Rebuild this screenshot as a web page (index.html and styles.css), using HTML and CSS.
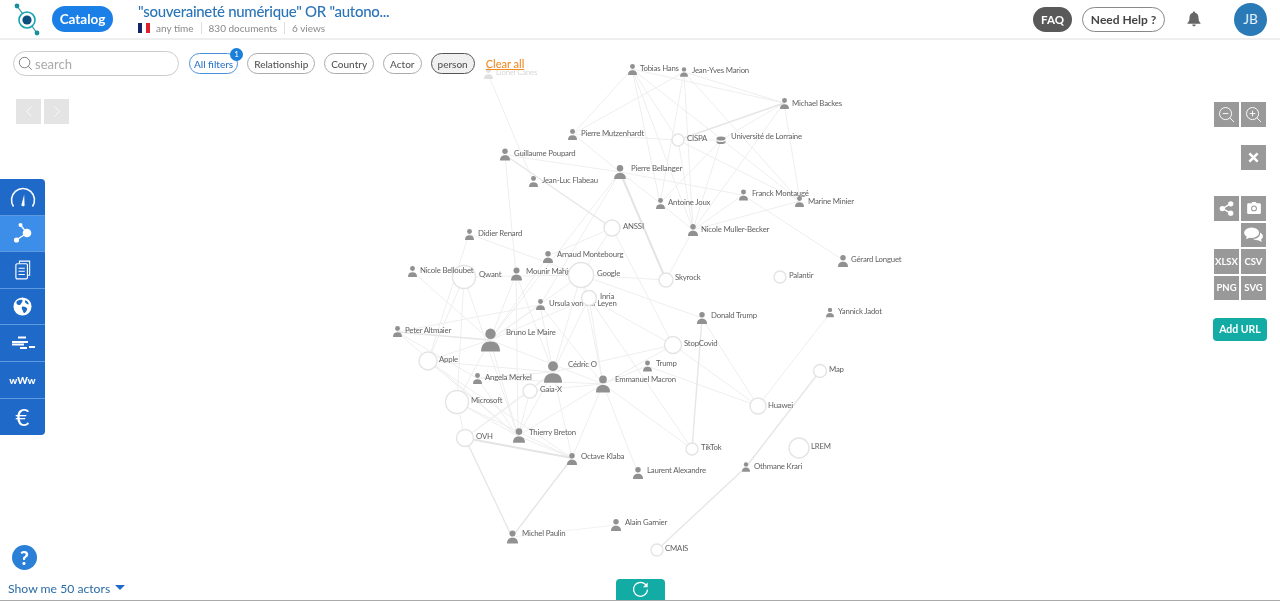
FILE: index.html
```html
<!DOCTYPE html>
<html lang="en">
<head>
    <meta charset="UTF-8">
    <meta name="viewport" content="width=device-width, initial-scale=1.0">
    <title>Catalog - actors</title>
    <link rel="stylesheet" href="styles.css">
</head>
<body>

    <header class="topbar">
        <svg class="logo" viewBox="0 0 30 34" width="30" height="34">
            <path d="M4 4 L24 31" stroke="#2a8f9c" stroke-width="1.2"/>
            <circle cx="4" cy="4" r="2.4" fill="#16919b"/>
            <circle cx="24" cy="31" r="2.4" fill="#16919b"/>
            <circle cx="14" cy="18" r="8" fill="#fff" stroke="#16a3ad" stroke-width="1.6"/>
            <circle cx="14" cy="18" r="4.6" fill="#0d4f7d"/>
        </svg>
        <a class="catalog-btn">Catalog</a>
        <div class="title-block">
            <div class="title">"souveraineté numérique" OR "autono...</div>
            <div class="meta">
                <span class="flag"><i class="flag__blue"></i><i class="flag__white"></i><i class="flag__red"></i></span>
                <span class="meta__item">any time</span>
                <span class="meta__item meta__item--sep">830 documents</span>
                <span class="meta__item meta__item--sep">6 views</span>
            </div>
        </div>
        <div class="topbar__right">
            <a class="faq-btn">FAQ</a>
            <a class="help-btn">Need Help ?</a>
            <svg class="bell" viewBox="0 0 14 16" width="14" height="16">
                <path d="M7 0.5 a1.2 1.2 0 0 1 1.2 1.3 C10.6 2.4 11.5 4.4 11.5 6.6 C11.5 9.6 12.2 10.8 13.5 12 L13.5 12.8 L0.5 12.8 L0.5 12 C1.8 10.8 2.5 9.6 2.5 6.6 C2.5 4.4 3.4 2.4 5.8 1.8 A1.2 1.2 0 0 1 7 0.5Z M5.2 13.6 h3.6 a1.8 1.8 0 0 1 -3.6 0Z" fill="#666"/>
            </svg>
            <div class="avatar">JB</div>
        </div>
    </header>

    <main class="canvas">

        <svg class="graph" viewBox="0 0 1280 601" width="1280" height="601">
            <defs>
                <symbol id="person" viewBox="0 0 20 24">
                    <circle cx="10" cy="5.5" r="5.5"/>
                    <path d="M0 24 C0 16.5 4 13.5 10 13.5 S20 16.5 20 24Z"/>
                </symbol>
            </defs>

            <!-- thin links -->
            <path class="edge" d="M632 69L573 134M632 69L660 203M632 69L693 230M632 69L678 140M632 69L800 201M632 69L784 103
                M684 72L573 134M684 72L660 203M684 72L800 201M684 72L693 230M684 72L784 103
                M784 103L721 140M784 103L800 201M784 103L693 230M573 134L678 140M678 140L721 140M678 140L693 230M678 140L800 201
                M721 140L660 203M721 140L693 230M573 134L620 172M505 155L620 172M488 74L533 181M620 172L660 203M620 172L743 195
                M660 203L693 230M743 195L693 230M693 230L800 201M743 195L843 260M693 230L666 280M505 155L516 274
                M620 172L490 340M620 172L540 305M612 228L548 256M612 228L581 275M612 228L673 345
                M581 275L666 280M581 275L469 234M581 275L702 318M581 275L589 298M581 275L490 340M581 275L553 372M581 275L603 384M464 277L581 275
                M589 298L673 345M589 298L692 449M589 298L603 384M589 298L553 372M589 298L490 340
                M397 332L540 305M540 305L603 384M540 305L553 372M540 305L490 340M412 271L490 340M490 340L518 436M490 340L428 361M490 340L548 256M490 340L516 274M490 340L603 384
                M516 274L518 436M516 274L553 372M464 277L428 361M464 277L457 402M464 277L518 436M469 234L428 361
                M397 332L477 378M397 332L518 436M428 361L553 372M428 361L518 436M553 372L673 345M553 372L477 378M553 372L530 391M553 372L518 436M553 372L465 438M553 372L572 458
                M603 384L673 345M603 384L647 366M603 384L477 378M603 384L692 449M603 384L572 458M603 384L518 436M647 366L758 406M603 384L530 391
                M702 318L758 406M830 313L758 406M673 345L758 406M477 378L518 436M457 402L518 436M457 402L465 438M530 391L465 438M530 391L518 436M518 436L572 458M457 402L572 458M603 384L638 473M490 340L457 402M428 361L572 458"/>
            <!-- stronger links -->
            <path class="edge edge--mid" d="M784 103L678 140M505 155L612 228M397 332L490 340M702 318L692 449M465 438L512 537M572 458L512 537M820 371L746 467M746 467L657 550"/>
            <path class="edge edge--thick" d="M620 172L666 280M465 438L572 458"/>
            <path class="edge edge--faint" d="M512 537L616 525"/>

            <!-- labels that sit under a circle -->
            <g class="labels">
                <text x="526" y="274">Mounir Mahjoubi</text>
                <text x="549" y="306">Ursula von der Leyen</text>
            </g>

            <g class="hubs">
                <circle cx="678" cy="140" r="6"/><circle cx="612" cy="228" r="8"/><circle cx="464" cy="277" r="11.5"/>
                <circle cx="581" cy="275" r="12.5"/><circle cx="666" cy="280" r="7"/><circle cx="780" cy="277" r="6"/>
                <circle cx="589" cy="298" r="7.5"/><circle cx="673" cy="345" r="8.5"/><circle cx="428" cy="361" r="9"/>
                <circle cx="820" cy="371" r="6.5"/><circle cx="530" cy="391" r="7"/><circle cx="457" cy="402" r="11.5"/>
                <circle cx="758" cy="406" r="8"/><circle cx="465" cy="438" r="8.5"/><circle cx="692" cy="449" r="6"/>
                <circle cx="799" cy="448" r="10"/><circle cx="657" cy="550" r="6"/>
            </g>

            <g class="people">
                <use href="#person" x="628" y="64" width="9" height="11"/>
                <use href="#person" x="680" y="67" width="8" height="10"/>
                <use href="#person" x="780" y="98" width="9" height="11"/>
                <use href="#person" x="568" y="129" width="9" height="11"/>
                <use href="#person" x="500" y="148" width="10" height="13"/>
                <use href="#person" x="614" y="165" width="12" height="14"/>
                <use href="#person" x="529" y="176" width="9" height="11"/>
                <use href="#person" x="656" y="198" width="9" height="11"/>
                <use href="#person" x="739" y="189" width="9" height="12"/>
                <use href="#person" x="795" y="196" width="9" height="11"/>
                <use href="#person" x="688" y="224" width="10" height="12"/>
                <use href="#person" x="465" y="229" width="9" height="11"/>
                <use href="#person" x="543" y="251" width="10" height="12"/>
                <use href="#person" x="838" y="255" width="10" height="12"/>
                <use href="#person" x="408" y="266" width="9" height="11"/>
                <use href="#person" x="511" y="267" width="11" height="14"/>
                <use href="#person" x="536" y="299" width="9" height="11"/>
                <use href="#person" x="697" y="312" width="10" height="12"/>
                <use href="#person" x="826" y="307" width="8" height="11"/>
                <use href="#person" x="393" y="326" width="9" height="11"/>
                <use href="#person" x="481" y="328" width="19" height="24"/>
                <use href="#person" x="643" y="360" width="9" height="12"/>
                <use href="#person" x="544" y="361" width="18" height="22"/>
                <use href="#person" x="473" y="373" width="9" height="11"/>
                <use href="#person" x="596" y="375" width="14" height="18"/>
                <use href="#person" x="513" y="428" width="12" height="15"/>
                <use href="#person" x="567" y="453" width="10" height="12"/>
                <use href="#person" x="633" y="467" width="10" height="12"/>
                <use href="#person" x="742" y="462" width="8" height="10"/>
                <use href="#person" x="611" y="519" width="10" height="12"/>
                <use href="#person" x="507" y="530" width="11" height="14"/>
            </g>

            <!-- database node -->
            <g class="db">
                <ellipse cx="721" cy="138.5" rx="4.5" ry="2"/>
                <path d="M716.5 140 a4.5 2 0 0 0 9 0 v2 a4.5 2 0 0 1 -9 0Z"/>
            </g>

            <g class="people people--faded">
                <use href="#person" x="484" y="68" width="9" height="11"/>
            </g>
            <text class="label-faded" x="496" y="75">Lionel Canes</text>

            <g class="labels">
                <text x="640" y="71">Tobias Hans</text>
                <text x="692" y="73">Jean-Yves Marion</text>
                <text x="792" y="106">Michael Backes</text>
                <text x="581" y="136">Pierre Mutzenhardt</text>
                <text x="687" y="141">CISPA</text>
                <text x="731" y="139">Université de Lorraine</text>
                <text x="514" y="156">Guillaume Poupard</text>
                <text x="631" y="171">Pierre Bellanger</text>
                <text x="542" y="183">Jean-Luc Flabeau</text>
                <text x="668" y="205">Antoine Joux</text>
                <text x="752" y="196">Franck Montaugé</text>
                <text x="808" y="204">Marine Minier</text>
                <text x="701" y="232">Nicole Muller-Becker</text>
                <text x="623" y="229">ANSSI</text>
                <text x="478" y="236">Didier Renard</text>
                <text x="557" y="257">Arnaud Montebourg</text>
                <text x="851" y="262">Gérard Longuet</text>
                <text x="420" y="273">Nicole Belloubet</text>
                <text x="479" y="277">Qwant</text>
                <text x="597" y="276">Google</text>
                <text x="675" y="280">Skyrock</text>
                <text x="789" y="278">Palantir</text>
                <text x="600" y="299">Inria</text>
                <text x="711" y="318">Donald Trump</text>
                <text x="838" y="314">Yannick Jadot</text>
                <text x="405" y="333">Peter Altmaier</text>
                <text x="506" y="335">Bruno Le Maire</text>
                <text x="684" y="346">StopCovid</text>
                <text x="439" y="362">Apple</text>
                <text x="656" y="366">Trump</text>
                <text x="829" y="372">Map</text>
                <text x="568" y="367">Cédric O</text>
                <text x="485" y="380">Angela Merkel</text>
                <text x="615" y="382">Emmanuel Macron</text>
                <text x="540" y="392">Gaia-X</text>
                <text x="471" y="403">Microsoft</text>
                <text x="768" y="408">Huawei</text>
                <text x="529" y="435">Thierry Breton</text>
                <text x="476" y="439">OVH</text>
                <text x="701" y="450">TikTok</text>
                <text x="811" y="449">LREM</text>
                <text x="581" y="459">Octave Klaba</text>
                <text x="647" y="473">Laurent Alexandre</text>
                <text x="754" y="469">Othmane Krari</text>
                <text x="625" y="525">Alain Garnier</text>
                <text x="522" y="536">Michel Paulin</text>
                <text x="665" y="551">CMAIS</text>
            </g>
        </svg>

        <div class="filters">
            <div class="search">
                <svg viewBox="0 0 16 16" width="15" height="15"><circle cx="7" cy="7" r="5.6" fill="none" stroke="#777" stroke-width="1"/><path d="M11 11L14.6 14.6" stroke="#777" stroke-width="1"/></svg>
                <span>search</span>
            </div>
            <div class="chips">
                <span class="chip chip--blue">All filters<b class="chip__badge">1</b></span>
                <span class="chip">Relationship</span>
                <span class="chip">Country</span>
                <span class="chip">Actor</span>
                <span class="chip chip--on">person</span>
                <a class="clear-all">Clear all</a>
            </div>
        </div>

        <div class="pager">
            <span class="pager__btn"><svg viewBox="0 0 10 16" width="8" height="13"><path d="M8 2L2 8L8 14" fill="none" stroke="#fff" stroke-width="1"/></svg></span>
            <span class="pager__btn"><svg viewBox="0 0 10 16" width="8" height="13"><path d="M2 2L8 8L2 14" fill="none" stroke="#fff" stroke-width="1"/></svg></span>
        </div>

        <nav class="sidemenu">
            <a class="sidemenu__item">
                <svg viewBox="0 0 28 24" width="28" height="24"><path d="M4.5 21.5 A11.5 11.5 0 1 1 23.5 21.5" fill="none" stroke="#fff" stroke-width="1.6"/><path d="M12.4 20 L15.2 9.5 L15.6 20.4 A1.7 1.7 0 0 1 12.4 20Z" fill="#fff"/></svg>
            </a>
            <a class="sidemenu__item sidemenu__item--on">
                <svg viewBox="0 0 22 22" width="22" height="22"><path d="M5 17.5L15 11L8.5 3" stroke="#fff" stroke-width="1.4" fill="none"/><circle cx="15" cy="11" r="4.3" fill="#fff"/><circle cx="4.5" cy="18" r="2.6" fill="#fff"/><circle cx="8.5" cy="3" r="2" fill="#fff"/></svg>
            </a>
            <a class="sidemenu__item">
                <svg viewBox="0 0 18 22" width="16" height="20"><path d="M5 3V1H16.5V17H14" fill="none" stroke="#fff" stroke-width="1.2"/><rect x="1" y="4" width="13" height="17" rx="1.5" fill="none" stroke="#fff" stroke-width="1.3"/><path d="M4 9H11M4 12.5H11M4 16H11" stroke="#fff" stroke-width="1.2"/></svg>
            </a>
            <a class="sidemenu__item">
                <svg viewBox="0 0 20 20" width="19" height="19"><circle cx="10" cy="10" r="9.5" fill="#fff"/><path d="M4 4.5C6 3 9 2.5 10 3.5C10.5 5 9 5.5 8.5 7C8 8.5 6 9 4.5 8C3.5 7 3.4 5.5 4 4.5ZM10 10C12 9.5 14.5 11 15 12.5C14.5 14.5 13 16.5 11.5 17C10.5 15.5 10.5 14 9.5 13C9 11.5 9 10.5 10 10ZM13 3.5C14.5 4 16 5.5 16.8 7.5C15.5 8 14 7 13 6C12.5 5 12.5 4 13 3.5Z" fill="#1f69c9"/></svg>
            </a>
            <a class="sidemenu__item">
                <svg viewBox="0 0 24 14" width="24" height="14"><path d="M7 1.5H15M1 6H17M1 8.5H13M9 12H16M18 11H24" stroke="#fff" stroke-width="2" fill="none"/></svg>
            </a>
            <a class="sidemenu__item sidemenu__item--text">wWw</a>
            <a class="sidemenu__item sidemenu__item--euro">€</a>
        </nav>

        <aside class="tools">
            <div class="tools__row tools__row--zoom">
                <span class="tool"><svg viewBox="0 0 18 18" width="17" height="17"><circle cx="8" cy="8" r="6.4" fill="none" stroke="#fff" stroke-width="1"/><path d="M12.6 12.6L17 17M5 8H11" stroke="#fff" stroke-width="1"/></svg></span>
                <span class="tool"><svg viewBox="0 0 18 18" width="17" height="17"><circle cx="8" cy="8" r="6.4" fill="none" stroke="#fff" stroke-width="1"/><path d="M12.6 12.6L17 17M5 8H11M8 5V11" stroke="#fff" stroke-width="1"/></svg></span>
            </div>
            <div class="tools__row tools__row--close">
                <span class="tool"><svg viewBox="0 0 12 12" width="11" height="11"><path d="M1.5 1.5L10.5 10.5M10.5 1.5L1.5 10.5" stroke="#fff" stroke-width="2.8"/></svg></span>
            </div>
            <div class="tools__grid">
                <span class="tool"><svg viewBox="0 0 16 16" width="15" height="15"><path d="M12 3L4 8L12 13" stroke="#fff" stroke-width="1.5" fill="none"/><circle cx="12.5" cy="3" r="2.8" fill="#fff"/><circle cx="3.5" cy="8" r="2.8" fill="#fff"/><circle cx="12.5" cy="13" r="2.8" fill="#fff"/></svg></span>
                <span class="tool"><svg viewBox="0 0 16 14" width="14" height="12"><path d="M5 1.5L6 0H10L11 1.5H14.5A1.5 1.5 0 0 1 16 3V12.5A1.5 1.5 0 0 1 14.5 14H1.5A1.5 1.5 0 0 1 0 12.5V3A1.5 1.5 0 0 1 1.5 1.5Z" fill="#fff"/><circle cx="8" cy="7.5" r="3.4" fill="#999"/><circle cx="8" cy="7.5" r="2.2" fill="#fff"/></svg></span>
                <span class="tool tool--slot2"><svg viewBox="0 0 20 16" width="19" height="15"><ellipse cx="8" cy="6" rx="8" ry="5.6" fill="#fff"/><path d="M3 9.5L2 13L7 11Z" fill="#fff"/><path d="M17 5.8C19 7 20 8.4 20 10C20 11.4 19 12.6 18 13.2L19 16L15 14C13.5 14.3 11 14 9.5 12.6C14 12.8 17.6 10 17 5.8Z" fill="#fff"/></svg></span>
                <span class="tool">XLSX</span>
                <span class="tool">CSV</span>
                <span class="tool">PNG</span>
                <span class="tool">SVG</span>
            </div>
            <a class="add-url">Add URL</a>
        </aside>

        <div class="footer-left">
            <span class="help-round">?</span>
            <a class="show-actors">Show me 50 actors<i class="caret"></i></a>
        </div>

        <a class="refresh">
            <svg viewBox="0 0 18 18" width="17" height="17"><path d="M15 4.4A7.4 7.4 0 1 0 16.4 9" fill="none" stroke="#fff" stroke-width="1.3"/><path d="M16.6 1.5V6.6H11.6Z" fill="#fff"/></svg>
        </a>
    </main>

</body>
</html>
```

FILE: styles.css
```css
* {
    box-sizing: border-box;
    margin: 0;
}
html, body {
    height: 100%;
    overflow: hidden;
}
body {
    font-family: "Lato", "Noto Sans", sans-serif;
    background: #fff;
    color: #555;
    /* the capture is soft, so is the page */
    filter: blur(0.35px);
}
a {
    cursor: pointer;
}

/* top bar */
.topbar {
    display: flex;
    align-items: center;
    height: 40px;
    padding: 0 13px 0 13px;
    border-bottom: 2px solid #eee;
}
.logo {
    flex: none;
}
.catalog-btn {
    margin-left: 9px;
    width: 61px;
    height: 26px;
    border-radius: 13px;
    background: #1a80e8;
    color: #fff;
    font-size: 13.5px;
    font-weight: 700;
    line-height: 26px;
    text-align: center;
}
.title-block {
    margin: -1px 0 0 25px;
}
.title {
    margin-bottom: 2px;
    color: #2a74b8;
    font-size: 15px;
    font-weight: 500;
    letter-spacing: -0.3px;
    line-height: 17px;
}
.meta {
    display: flex;
    align-items: center;
    color: #8a8a8a;
    font-size: 10px;
    height: 12px;
}
.flag {
    display: flex;
    width: 12px;
    height: 10px;
    margin-right: 6px;
}
.flag i {
    flex: 1;
}
.flag__blue { background: #14256b; }
.flag__white { background: #fff; }
.flag__red { background: #e0202c; }
.meta__item--sep {
    margin-left: 7px;
    padding-left: 7px;
    border-left: 1px solid #ddd;
}
.topbar__right {
    display: flex;
    align-items: center;
    margin-left: auto;
}
.faq-btn {
    width: 39px;
    height: 25px;
    border-radius: 13px;
    background: #595959;
    color: #fff;
    font-size: 11.5px;
    font-weight: 700;
    line-height: 25px;
    text-align: center;
}
.help-btn {
    margin-left: 10px;
    width: 83px;
    height: 25px;
    border: 1px solid #888;
    border-radius: 13px;
    color: #444;
    font-size: 12px;
    font-weight: 700;
    line-height: 23px;
    text-align: center;
}
.bell {
    margin-left: 22px;
}
.avatar {
    margin-left: 33px;
    width: 33px;
    height: 33px;
    border-radius: 50%;
    background: #2a7ab8;
    color: #e8f2fa;
    font-size: 13.5px;
    line-height: 33px;
    text-align: center;
}

/* the graph fills the window, everything else floats on it */
.canvas {
    position: relative;
    height: 561px;
    border-bottom: 1px solid #aaa;
}
.graph {
    position: absolute;
    top: -40px;
    left: 0;
}
.edge {
    fill: none;
    stroke: #eeeeee;
    stroke-width: 1;
}
.edge--mid {
    stroke: #e6e6e6;
    stroke-width: 1.4;
}
.edge--thick {
    stroke: #e4e4e4;
    stroke-width: 2;
}
.edge--faint {
    stroke: #f2f2f2;
}
.hubs circle {
    fill: #fff;
    stroke: #e4e4e4;
    stroke-width: 1.4;
}
.people,
.db {
    fill: #919191;
}
.people--faded {
    fill: #e0e0e0;
}
.labels text {
    fill: #5f5f5f;
    font-size: 7.8px;
    letter-spacing: -0.2px;
}
.label-faded {
    fill: #d8d8d8;
    font-size: 7.8px;
    letter-spacing: -0.2px;
}

/* filter row */
.filters {
    position: relative;
    display: flex;
    align-items: center;
    padding: 11px 0 0 13px;
}
.search {
    display: flex;
    align-items: center;
    gap: 2px;
    width: 166px;
    height: 25px;
    padding-left: 4px;
    border: 1px solid #ccc;
    border-radius: 13px;
    color: #aaa;
    font-size: 13px;
}
.chips {
    display: flex;
    align-items: center;
    margin-left: 10px;
}
.chip {
    position: relative;
    height: 21px;
    margin-right: 9px;
    padding: 0 6px;
    border: 1px solid #aaa;
    border-radius: 11px;
    color: #555;
    font-size: 10px;
    font-weight: 500;
    line-height: 20px;
}
.chip--blue {
    padding: 0 4px;
    border-color: #4a90d9;
    color: #2a74c8;
}
.chip--on {
    border: 1.5px solid #555;
    background: #f0f0f0;
}
.chip__badge {
    position: absolute;
    top: -6px;
    right: -6px;
    width: 13px;
    height: 13px;
    border-radius: 50%;
    background: #1a7fd8;
    color: #fff;
    font-size: 8px;
    font-weight: 400;
    line-height: 13px;
    text-align: center;
}
.clear-all {
    margin-left: 2px;
    color: #f08a24;
    font-size: 11px;
    font-weight: 500;
    text-decoration: underline;
}
.pager {
    position: absolute;
    top: 59px;
    left: 16px;
    display: flex;
    gap: 3px;
}
.pager__btn {
    display: flex;
    align-items: center;
    justify-content: center;
    width: 25px;
    height: 25px;
    background: #e4e4e4;
}

/* left menu */
.sidemenu {
    position: absolute;
    top: 139px;
    left: 0;
    width: 45px;
    overflow: hidden;
    border-radius: 0 4px 4px 0;
}
.sidemenu__item {
    display: flex;
    align-items: center;
    justify-content: center;
    height: 36.6px;
    background: #1f69c9;
    color: #fff;
    border-bottom: 1px solid #5f9ae0;
}
.sidemenu__item:last-child {
    border-bottom: 0;
}
.sidemenu__item--on {
    background: #3d8ee8;
}
.sidemenu__item--text {
    font-size: 10px;
    font-weight: 900;
}
.sidemenu__item--euro {
    font-size: 24px;
}

/* right toolbox */
.tools {
    position: absolute;
    top: 62px;
    left: 1214px;
    width: 52px;
}
.tools__row {
    display: flex;
    justify-content: flex-end;
    gap: 2px;
}
.tools__row--close {
    margin-top: 18px;
}
.tools__grid {
    display: grid;
    grid-template-columns: 25px 25px;
    grid-auto-rows: 24.5px;
    gap: 2px;
    justify-content: end;
    margin-top: 26px;
}
.tool {
    display: flex;
    align-items: center;
    justify-content: center;
    width: 25px;
    height: 25px;
    background: #999;
    color: #fff;
    font-size: 9.5px;
    font-weight: 700;
}
.tools__grid .tool {
    height: 24.5px;
}
.tool--slot2 {
    grid-column: 2;
}
.add-url {
    display: block;
    height: 23px;
    margin: 18px -1px 0;
    border-radius: 4px;
    background: #12aca5;
    color: #fff;
    font-size: 10.5px;
    font-weight: 700;
    line-height: 23px;
    text-align: center;
}

/* bottom */
.footer-left {
    position: absolute;
    left: 8px;
    bottom: 4px;
}
.help-round {
    display: block;
    width: 25px;
    height: 25px;
    margin: 0 0 11px 4px;
    border-radius: 50%;
    background: #2a7fd6;
    color: #fff;
    font-size: 19px;
    font-weight: 900;
    line-height: 25px;
    text-align: center;
}
.show-actors {
    display: flex;
    align-items: center;
    color: #2a6ca8;
    font-size: 12.2px;
}
.caret {
    width: 0;
    height: 0;
    margin: -3px 0 0 5px;
    border-left: 5px solid transparent;
    border-right: 5px solid transparent;
    border-top: 5px solid #1f69c9;
}
.refresh {
    position: absolute;
    left: 616px;
    bottom: 0;
    display: flex;
    align-items: center;
    justify-content: center;
    width: 49px;
    height: 21px;
    border-radius: 4px 4px 0 0;
    background: #12aca5;
}
```
